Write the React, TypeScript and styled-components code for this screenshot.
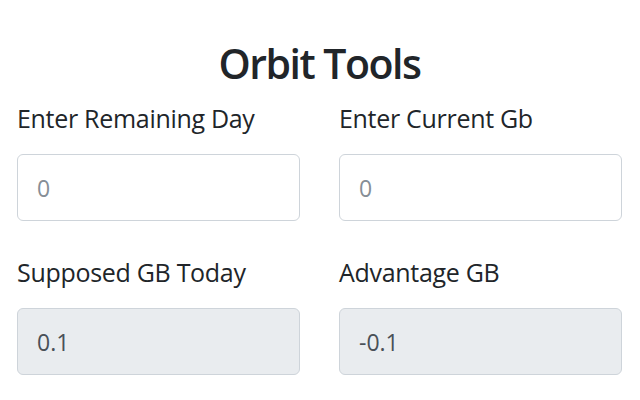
import styled, { createGlobalStyle } from 'styled-components';

const Global = createGlobalStyle`
  html, body { margin: 0; padding: 0; background: #fff; }
  body {
    font-family: "Open Sans", "Noto Sans", sans-serif;
    color: #212529;
  }
  * { box-sizing: border-box; }
`;

const Page = styled.div`
  width: 640px;
  height: 400px;
  padding: 39px 18px 0 17px;
  overflow: hidden;
`;

const Title = styled.h1`
  margin: 0 0 13px;
  text-align: center;
  font-size: 41px;
  font-weight: 600;
  line-height: 48px;
  color: #212529;
  letter-spacing: -1.5px;
`;

const Grid = styled.div`
  display: grid;
  grid-template-columns: 1fr 1fr;
  column-gap: 39px;
  row-gap: 33px;
`;

const Field = styled.div`
  display: flex;
  flex-direction: column;
`;

const Label = styled.label`
  font-size: 25px;
  line-height: 36px;
  margin-bottom: 18px;
  color: #212529;
  letter-spacing: -0.3px;
`;

const Input = styled.input<{ $readOnly?: boolean }>`
  height: 67px;
  width: 100%;
  padding: 0 19px;
  font: inherit;
  font-size: 23px;
  color: #495057;
  background: ${({ $readOnly }) => ($readOnly ? '#e9ecef' : '#fff')};
  border: 1px solid #ced4da;
  border-radius: 6px;
  outline: none;
  &::placeholder { color: #868e96; }
`;

const fields = [
  { label: 'Enter Remaining Day', placeholder: '0' },
  { label: 'Enter Current Gb', placeholder: '0' },
  { label: 'Supposed GB Today', value: '0.1' },
  { label: 'Advantage GB', value: '-0.1' },
];

export default function App() {
  return (
    <Page>
      <Global />
      <Title>Orbit Tools</Title>
      <Grid>
        {fields.map((f) => (
          <Field key={f.label}>
            <Label>{f.label}</Label>
            {f.value !== undefined ? (
              <Input $readOnly readOnly value={f.value} />
            ) : (
              <Input placeholder={f.placeholder} />
            )}
          </Field>
        ))}
      </Grid>
    </Page>
  );
}
